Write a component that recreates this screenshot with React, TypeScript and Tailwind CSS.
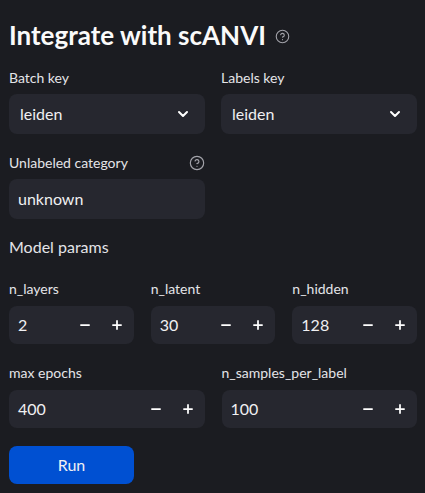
import { ChevronDown, Minus, Plus, CircleHelp } from 'lucide-react';

function Label({ text, help }: { text: string; help?: boolean }) {
  return (
    <div className="flex items-center justify-between h-[20px] text-[14px] leading-[20px] text-[#e4e4e8]">
      <span>{text}</span>
      {help && <CircleHelp className="w-[16px] h-[16px] text-[#a3a3aa]" strokeWidth={1.75} />}
    </div>
  );
}

function Select({ label, value }: { label: string; value: string }) {
  return (
    <div>
      <Label text={label} />
      <div className="mt-[6px] h-[40px] rounded-lg bg-[#26272f] flex items-center justify-between pl-[11px] pr-[14px] text-[16px] text-[#f0f0f2]">
        <span>{value}</span>
        <ChevronDown className="w-[16px] h-[16px] text-white" strokeWidth={3} />
      </div>
    </div>
  );
}

function NumberInput({ label, value }: { label: string; value: string }) {
  return (
    <div>
      <Label text={label} />
      <div className="mt-[7px] h-[38px] rounded-lg bg-[#26272f] flex items-center text-[16px] text-[#f0f0f2]">
        <span className="flex-1 pl-[9px]">{value}</span>
        <span className="w-[32px] flex justify-center">
          <Minus className="w-[14px] h-[14px] text-white" strokeWidth={3} />
        </span>
        <span className="w-[32px] flex justify-center mr-[1px]">
          <Plus className="w-[14px] h-[14px] text-white" strokeWidth={3} />
        </span>
      </div>
    </div>
  );
}

export default function App() {
  return (
    <div
      className="w-[425px] h-[493px] bg-[#1b1c21] pl-[9px] pr-[8px] overflow-hidden"
      style={{ fontFamily: 'Lato, "Noto Sans", sans-serif' }}
    >
      {/* Title */}
      <div className="pt-[18px] flex items-center gap-[9px] h-[52px]">
        <h1 className="text-[26px] leading-[34px] font-bold text-[#fafafa]">Integrate with scANVI</h1>
        <CircleHelp className="w-[15px] h-[15px] mt-[2px] text-[#a3a3aa]" strokeWidth={1.75} />
      </div>

      <div className="mt-[16px] grid grid-cols-2 gap-x-[16px]">
        <Select label="Batch key" value="leiden" />
        <Select label="Labels key" value="leiden" />
      </div>

      <div className="mt-[19px] grid grid-cols-2 gap-x-[16px]">
        <div>
          <Label text="Unlabeled category" help />
          <div className="mt-[6px] h-[40px] rounded-lg bg-[#26272f] flex items-center px-[9px] text-[16px] text-[#f0f0f2]">
            unknown
          </div>
        </div>
      </div>

      <div className="mt-[16px] h-[24px] leading-[24px] text-[16px] text-[#e4e4e8]">Model params</div>

      <div className="mt-[20px] grid grid-cols-3 gap-x-[17px]">
        <NumberInput label="n_layers" value="2" />
        <NumberInput label="n_latent" value="30" />
        <NumberInput label="n_hidden" value="128" />
      </div>

      <div className="mt-[19px] grid grid-cols-2 gap-x-[17px]">
        <NumberInput label="max epochs" value="400" />
        <NumberInput label="n_samples_per_label" value="100" />
      </div>

      <button className="mt-[18px] w-[125px] h-[38px] rounded-lg bg-[#0050d2] text-[16px] text-[#f0f0f2]">
        Run
      </button>
    </div>
  );
}
